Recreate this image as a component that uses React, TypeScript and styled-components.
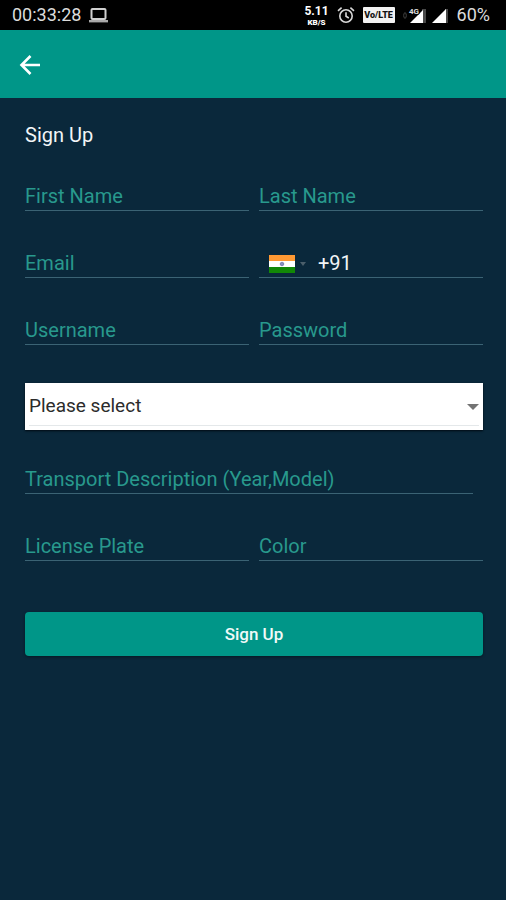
import React, { useState } from "react";
import styled, { createGlobalStyle } from "styled-components";

const teal = "#009688";
const navy = "#0a283b";

const GlobalStyle = createGlobalStyle`
  *, *::before, *::after { box-sizing: border-box; }
  body { margin: 0; background: ${navy}; }
  body, button, input, select { font-family: Roboto, "Noto Sans", sans-serif; }
`;

const Screen = styled.div`
  min-height: 100vh;
  background: ${navy};
  color: #fff;
`;

const StatusBar = styled.div`
  display: flex;
  align-items: center;
  justify-content: space-between;
  height: 30px;
  padding: 0 16px 0 12px;
  background: #000;
  color: #dcdcdc;
  font-size: 18px;
  line-height: 30px;
`;

const StatusGroup = styled.div<{ $gap: number }>`
  display: flex;
  align-items: center;
  gap: ${(p) => p.$gap}px;
`;

const Speed = styled.div`
  display: flex;
  flex-direction: column;
  align-items: center;
  font-size: 12px;
  font-weight: 700;
  color: #fff;
`;

const SpeedValue = styled.span`
  line-height: 14px;
`;

const SpeedUnit = styled.span`
  font-size: 8px;
  font-weight: 900;
  line-height: 9px;
`;

const VolteBadge = styled.span`
  width: 32px;
  height: 16px;
  border-radius: 1px;
  background: #f2f2f2;
  color: #111;
  font-size: 9px;
  font-weight: 900;
  line-height: 16px;
  text-align: center;
`;

const AppBar = styled.header`
  display: flex;
  align-items: center;
  height: 68px;
  padding: 2px 18px 0;
  background: ${teal};
`;

const BackButton = styled.button`
  display: flex;
  padding: 0;
  border: 0;
  background: none;
  color: #fff;
  cursor: pointer;
`;

const Form = styled.form`
  display: flex;
  flex-direction: column;
  padding: 24px 23px 24px 25px;
`;

const Title = styled.h1`
  margin: 0 0 35px;
  font-size: 20px;
  font-weight: 400;
  line-height: 26px;
  color: #f2f5f7;
`;

const Fields = styled.div`
  display: grid;
  grid-template-columns: 1fr 1fr;
  gap: 39px 10px;
`;

const fieldLine = "1px solid #3b6374";

const TextField = styled.input<{ $wide?: boolean }>`
  grid-column: ${(p) => (p.$wide ? "1 / -1" : "auto")};
  margin: ${(p) => (p.$wide ? "0 10px 0 0" : "0")};
  min-width: 0;
  height: 28px;
  padding: 0 0 1px;
  border: 0;
  border-bottom: ${fieldLine};
  border-radius: 0;
  outline: 0;
  background: none;
  color: #fff;
  font-size: 20px;
  line-height: 26px;
  &::placeholder { color: #28998d; opacity: 1; }
  &:focus { border-color: ${teal}; }
`;

const PhoneField = styled.div`
  display: flex;
  align-items: center;
  min-width: 0;
  height: 28px;
  padding: 0 0 1px 10px;
  border-bottom: ${fieldLine};
`;

const CountryButton = styled.button`
  display: flex;
  align-items: center;
  gap: 5px;
  margin-right: 12px;
  padding: 2px 0 0;
  border: 0;
  background: none;
  cursor: pointer;
`;

const PhoneInput = styled.input`
  flex: 1;
  min-width: 0;
  padding: 0;
  border: 0;
  outline: 0;
  background: none;
  color: #f2f5f7;
  font-size: 20px;
  line-height: 26px;
`;

const SelectBox = styled.div`
  display: flex;
  align-items: center;
  height: 47px;
  margin: 38px 0 36px;
  padding: 0 4px;
  background: #fff;
  box-shadow: 0 1px 2px #000a12;
`;

const Select = styled.select`
  flex: 1;
  height: 38px;
  padding: 0 20px 1px 0;
  appearance: none;
  border: 0;
  border-bottom: 1px solid #e4e8ea;
  border-radius: 0;
  outline: 0;
  background: none;
  color: #2b2b2b;
  font-size: 19px;
`;

const SelectArrow = styled.svg`
  margin-left: -12px;
  pointer-events: none;
`;

const SubmitButton = styled.button`
  height: 44px;
  margin-top: 51px;
  padding: 0;
  border: 0;
  border-radius: 4px;
  background: ${teal};
  box-shadow: 0 1px 3px rgba(0, 0, 0, 0.4);
  color: #f0faf8;
  font-size: 17px;
  font-weight: 500;
  line-height: 44px;
  cursor: pointer;
`;

const LaptopIcon = () => (
  <svg width="19" height="16" viewBox="0 0 19 16" aria-hidden="true">
    <rect x="2.5" y="2" width="14" height="10" rx="1" fill="none" stroke="#d0d0d0" strokeWidth="2" />
    <path d="M0 13h19v2.4H0z" fill="#a8a8a8" />
  </svg>
);

const AlarmIcon = () => (
  <svg width="18" height="18" viewBox="0 0 18 18" fill="none" stroke="#d8d8d8" strokeWidth="1.6" aria-hidden="true">
    <circle cx="9" cy="10" r="6.2" />
    <path d="M9 6.3v4l2.8 1.7M1 4.8 4.6 1.6M17 4.8l-3.6-3.2" />
  </svg>
);

const RoamingSignalIcon = () => (
  <svg width="24" height="17" viewBox="0 0 24 17" aria-hidden="true">
    <ellipse cx="2" cy="8.5" rx="1.3" ry="2.8" fill="none" stroke="#444" />
    <path d="M19 2h4v14h-4z" fill="#484848" />
    <path d="M20 3v13H7z" fill="#fff" />
    <text x="6" y="7" fill="#ddd" stroke="#000" strokeWidth="2" paintOrder="stroke" fontFamily="Roboto, sans-serif" fontSize="8" fontWeight="700">4G</text>
  </svg>
);

const SignalIcon = () => (
  <svg width="17" height="17" viewBox="0 0 17 17" aria-hidden="true">
    <path d="M13 2h3v14h-3z" fill="#484848" />
    <path d="M14 2v14H0z" fill="#fff" />
  </svg>
);

const BackIcon = () => (
  <svg width="24" height="24" viewBox="0 0 24 24" fill="none" stroke="currentColor" strokeWidth="2.6" aria-hidden="true">
    <path d="M22 12H4M12.5 3 3.5 12l9 9" />
  </svg>
);

const IndiaFlag = () => (
  <svg width="26" height="18" viewBox="0 0 26 18" aria-hidden="true">
    <path d="M0 0h26v6H0z" fill="#ff9933" />
    <path d="M0 6h26v6H0z" fill="#fff" />
    <path d="M0 12h26v6H0z" fill="#128807" />
    <circle cx="13" cy="9" r="1.8" fill="#8890bd" stroke="#555b9c" strokeWidth=".6" />
  </svg>
);

export default function App() {
  const [phone, setPhone] = useState("+91");
  return (
    <Screen>
      <GlobalStyle />
      <StatusBar>
        <StatusGroup $gap={8}>
          <span>00:33:28</span>
          <LaptopIcon />
        </StatusGroup>
        <StatusGroup $gap={8}>
          <Speed>
            <SpeedValue>5.11</SpeedValue>
            <SpeedUnit>KB/S</SpeedUnit>
          </Speed>
          <AlarmIcon />
          <VolteBadge>Vo/LTE</VolteBadge>
          <StatusGroup $gap={5}>
            <RoamingSignalIcon />
            <SignalIcon />
          </StatusGroup>
          <span>60%</span>
        </StatusGroup>
      </StatusBar>
      <AppBar>
        <BackButton type="button" aria-label="Back">
          <BackIcon />
        </BackButton>
      </AppBar>
      <Form onSubmit={(e) => e.preventDefault()}>
        <Title>Sign Up</Title>
        <Fields>
          <TextField aria-label="First Name" placeholder="First Name" />
          <TextField aria-label="Last Name" placeholder="Last Name" />
          <TextField type="email" aria-label="Email" placeholder="Email" />
          <PhoneField>
            <CountryButton type="button" aria-label="Country: India" aria-haspopup="listbox">
              <IndiaFlag />
              <svg width="6" height="4" viewBox="0 0 6 4" aria-hidden="true">
                <path d="M0 0h6L3 4z" fill="#4b5f6b" />
              </svg>
            </CountryButton>
            <PhoneInput type="tel" aria-label="Phone number" value={phone} onChange={(e) => setPhone(e.target.value)} />
          </PhoneField>
          <TextField aria-label="Username" placeholder="Username" />
          <TextField type="password" aria-label="Password" placeholder="Password" />
        </Fields>
        <SelectBox>
          <Select aria-label="Transport type" defaultValue="">
            <option value="">Please select</option>
          </Select>
          <SelectArrow width="12" height="6" viewBox="0 0 12 6" aria-hidden="true">
            <path d="M0 0h12L6 6z" fill="#737373" />
          </SelectArrow>
        </SelectBox>
        <Fields>
          <TextField $wide aria-label="Transport Description (Year,Model)" placeholder="Transport Description (Year,Model)" />
          <TextField aria-label="License Plate" placeholder="License Plate" />
          <TextField aria-label="Color" placeholder="Color" />
        </Fields>
        <SubmitButton type="submit">Sign Up</SubmitButton>
      </Form>
    </Screen>
  );
}
